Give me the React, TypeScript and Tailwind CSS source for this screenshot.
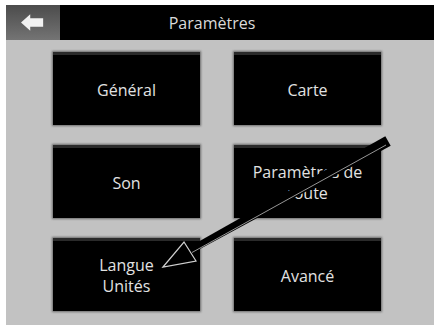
import { ReactNode } from "react";

function Tile({ children }: { children: ReactNode }) {
  return (
    <div className="h-[73px] bg-black border-t-[3px] border-[#2a2a2a] shadow-[0_0_2px_1px_rgba(0,0,0,0.45)] flex items-center justify-center text-center text-[16px] leading-[21px] text-[#e2e2e2] font-medium">
      <div>{children}</div>
    </div>
  );
}

export default function App() {
  return (
    <div
      className="relative w-[434px] h-[328px] bg-white pl-[6px] pt-[5px] pb-[3px] overflow-hidden"
      style={{ fontFamily: '"Open Sans", "DejaVu Sans", sans-serif' }}
    >
      <div className="flex flex-col h-full">
        <div className="h-[35px] bg-black flex">
          <div className="w-[54px] bg-gradient-to-b from-[#4c4c4c] to-[#747474] flex items-center justify-center">
            <svg width="24" height="17" viewBox="0 0 26 18" className="blur-[0.4px]">
              <polygon points="0,9 10,0 10,4.5 24,4.5 24,13.5 10,13.5 10,18" fill="#f2f2f2" />
            </svg>
          </div>
          <div className="flex-1 flex items-center justify-center pr-[70px] text-[16px] font-medium text-[#dadada]">
            Paramètres
          </div>
        </div>
        <div className="flex-1 bg-[#c2c2c2] pl-[47px] pt-[12px]">
          <div className="grid grid-cols-[147px_147px] gap-x-[34px] gap-y-[20px]">
            <Tile>Général</Tile>
            <Tile>Carte</Tile>
            <Tile>Son</Tile>
            <Tile>
              Paramètres de
              <br />
              route
            </Tile>
            <Tile>
              Langue
              <br />
              Unités
            </Tile>
            <Tile>Avancé</Tile>
          </div>
        </div>
      </div>
      <svg className="absolute left-0 top-0" width="434" height="328" viewBox="0 0 434 328">
        <polygon points="187.3,247.9 385.3,136.2 390.7,145.8 190.7,254.1" fill="#000" />
        <line x1="192" y1="252.5" x2="386" y2="145" stroke="#bdbdbd" strokeWidth="0.8" />
        <polygon points="163,267 184,242 196,261" fill="#000" stroke="#cfcfcf" strokeWidth="1.2" strokeLinejoin="miter" />
      </svg>
    </div>
  );
}
